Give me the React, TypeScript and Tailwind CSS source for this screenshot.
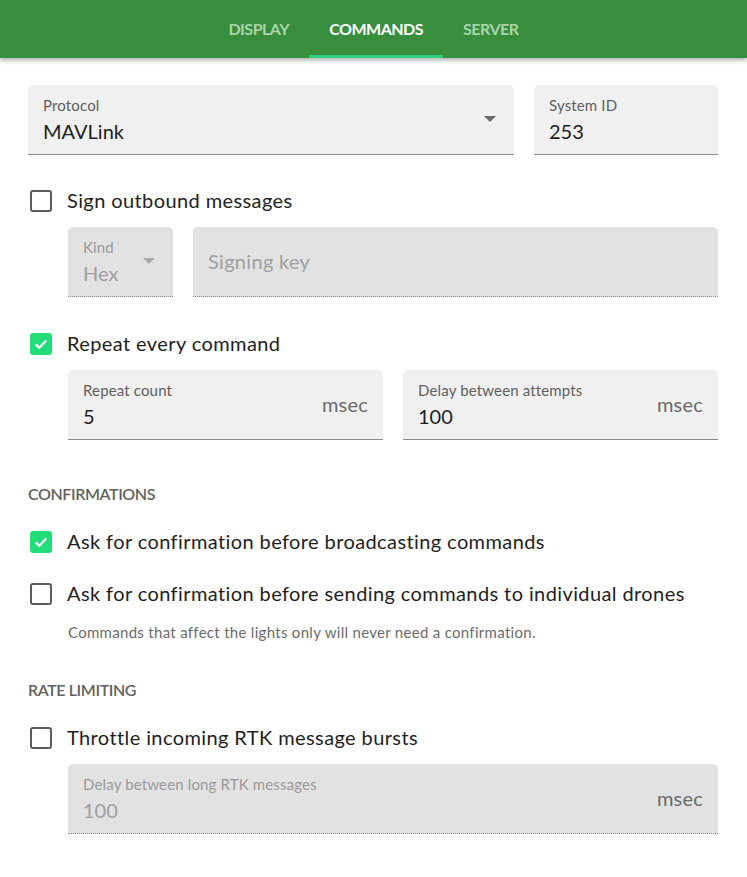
import React from "react";

const font = { fontFamily: "Lato, 'Noto Sans', sans-serif" };

function Tab({ label, active }: { label: string; active?: boolean }) {
  return (
    <div className="relative flex h-full items-center px-[20px]">
      <span
        className={
          "text-[16px] font-bold uppercase tracking-[-0.5px] " +
          (active ? "text-white" : "text-[#a8d5aa]")
        }
      >
        {label}
      </span>
      {active && <div className="absolute bottom-0 left-0 right-0 h-[3px] bg-[#2fd27a]" />}
    </div>
  );
}

function Arrow({ disabled }: { disabled?: boolean }) {
  return (
    <svg width="12" height="6" viewBox="0 0 12 6" className="shrink-0">
      <path d="M0 0 L12 0 L6 6 Z" fill={disabled ? "#a8a8a8" : "#6b6b6b"} />
    </svg>
  );
}

function Field({
  label,
  value,
  placeholder,
  adornment,
  select,
  disabled,
  className,
}: {
  label?: string;
  value?: string;
  placeholder?: string;
  adornment?: string;
  select?: boolean;
  disabled?: boolean;
  className?: string;
}) {
  return (
    <div
      className={
        "flex h-[70px] items-center rounded-t-[5px] pl-[15px] pr-[15px] " +
        (disabled
          ? "border-b border-dotted border-[#8a8a8a] bg-[#e2e2e2] "
          : "border-b border-[#8a8a8a] bg-[#f0f0f0] ") +
        (className ?? "")
      }
    >
      <div className="flex min-w-0 flex-1 flex-col">
        {label && (
          <span
            className={
              "text-[15px] leading-[18px] tracking-[0.15px] " +
              (disabled ? "text-[#9a9a9a]" : "text-[#5f5f5f]")
            }
          >
            {label}
          </span>
        )}
        {value && (
          <span
            className={
              "mt-[4px] text-[20px] leading-[26px] " +
              (disabled ? "text-[#a0a0a0]" : "text-[#1e1e1e]")
            }
          >
            {value}
          </span>
        )}
        {placeholder && (
          <span className="-mt-[2px] text-[20px] leading-[26px] tracking-[0.3px] text-[#a0a0a0]">
            {placeholder}
          </span>
        )}
      </div>
      {select && (
        <div className="mr-[3px] pb-[2px]">
          <Arrow disabled={disabled} />
        </div>
      )}
      {adornment && (
        <span className="-mt-[2px] text-[20px] tracking-[0.2px] text-[#6a6a6a]">{adornment}</span>
      )}
    </div>
  );
}

function Checkbox({ label, checked }: { label: string; checked?: boolean }) {
  return (
    <div className="flex h-[52px] items-center">
      <div className="flex w-[39px] justify-start pl-[2px]">
        {checked ? (
          <div className="flex h-[22px] w-[22px] items-center justify-center rounded-[3px] bg-[#22de7a]">
            <svg width="16" height="16" viewBox="0 0 16 16">
              <path
                d="M2.8 8.4 L6.3 11.8 L13.2 4.6"
                fill="none"
                stroke="white"
                strokeWidth="2.2"
              />
            </svg>
          </div>
        ) : (
          <div className="h-[22px] w-[22px] rounded-[3px] border-2 border-[#5c5c5c]" />
        )}
      </div>
      <span className="-mt-[3px] text-[20px] tracking-[0.4px] text-[#1e1e1e]">{label}</span>
    </div>
  );
}

function SectionTitle({ children }: { children: React.ReactNode }) {
  return (
    <div className="text-[16px] font-semibold uppercase leading-[24px] tracking-[-0.4px] text-[#616161]">
      {children}
    </div>
  );
}

export default function App() {
  return (
    <div className="min-h-[877px] bg-white" style={font}>
      <div className="relative z-10 flex h-[58px] justify-center bg-[#388e3c] shadow-[0_2px_5px_rgba(0,0,0,0.35)]">
        <Tab label="Display" />
        <Tab label="Commands" active />
        <Tab label="Server" />
      </div>

      <div className="pl-[28px] pr-[29px] pt-[27px]">
        <div className="flex gap-[20px]">
          <Field label="Protocol" value="MAVLink" select className="flex-1" />
          <Field label="System ID" value="253" className="w-[184px]" />
        </div>

        <div className="mt-[20px]">
          <Checkbox label="Sign outbound messages" />
        </div>
        <div className="ml-[40px] flex gap-[20px]">
          <Field label="Kind" value="Hex" select disabled className="w-[105px]" />
          <Field placeholder="Signing key" disabled className="flex-1" />
        </div>

        <div className="mt-[21px]">
          <Checkbox label="Repeat every command" checked />
        </div>
        <div className="ml-[40px] flex gap-[20px]">
          <Field label="Repeat count" value="5" adornment="msec" className="flex-1" />
          <Field label="Delay between attempts" value="100" adornment="msec" className="flex-1" />
        </div>

        <div className="mt-[42px]">
          <SectionTitle>Confirmations</SectionTitle>
        </div>
        <div className="mt-[10px]">
          <Checkbox label="Ask for confirmation before broadcasting commands" checked />
          <Checkbox label="Ask for confirmation before sending commands to individual drones" />
        </div>
        <div className="ml-[40px] mt-[2px] text-[15px] leading-[20px] tracking-[0.3px] text-[#6b6b6b]">
          Commands that affect the lights only will never need a confirmation.
        </div>

        <div className="mt-[36px]">
          <SectionTitle>Rate limiting</SectionTitle>
        </div>
        <div className="mt-[10px]">
          <Checkbox label="Throttle incoming RTK message bursts" />
        </div>
        <div className="ml-[40px]">
          <Field
            label="Delay between long RTK messages"
            value="100"
            adornment="msec"
            disabled
            className="w-full"
          />
        </div>
      </div>
    </div>
  );
}
